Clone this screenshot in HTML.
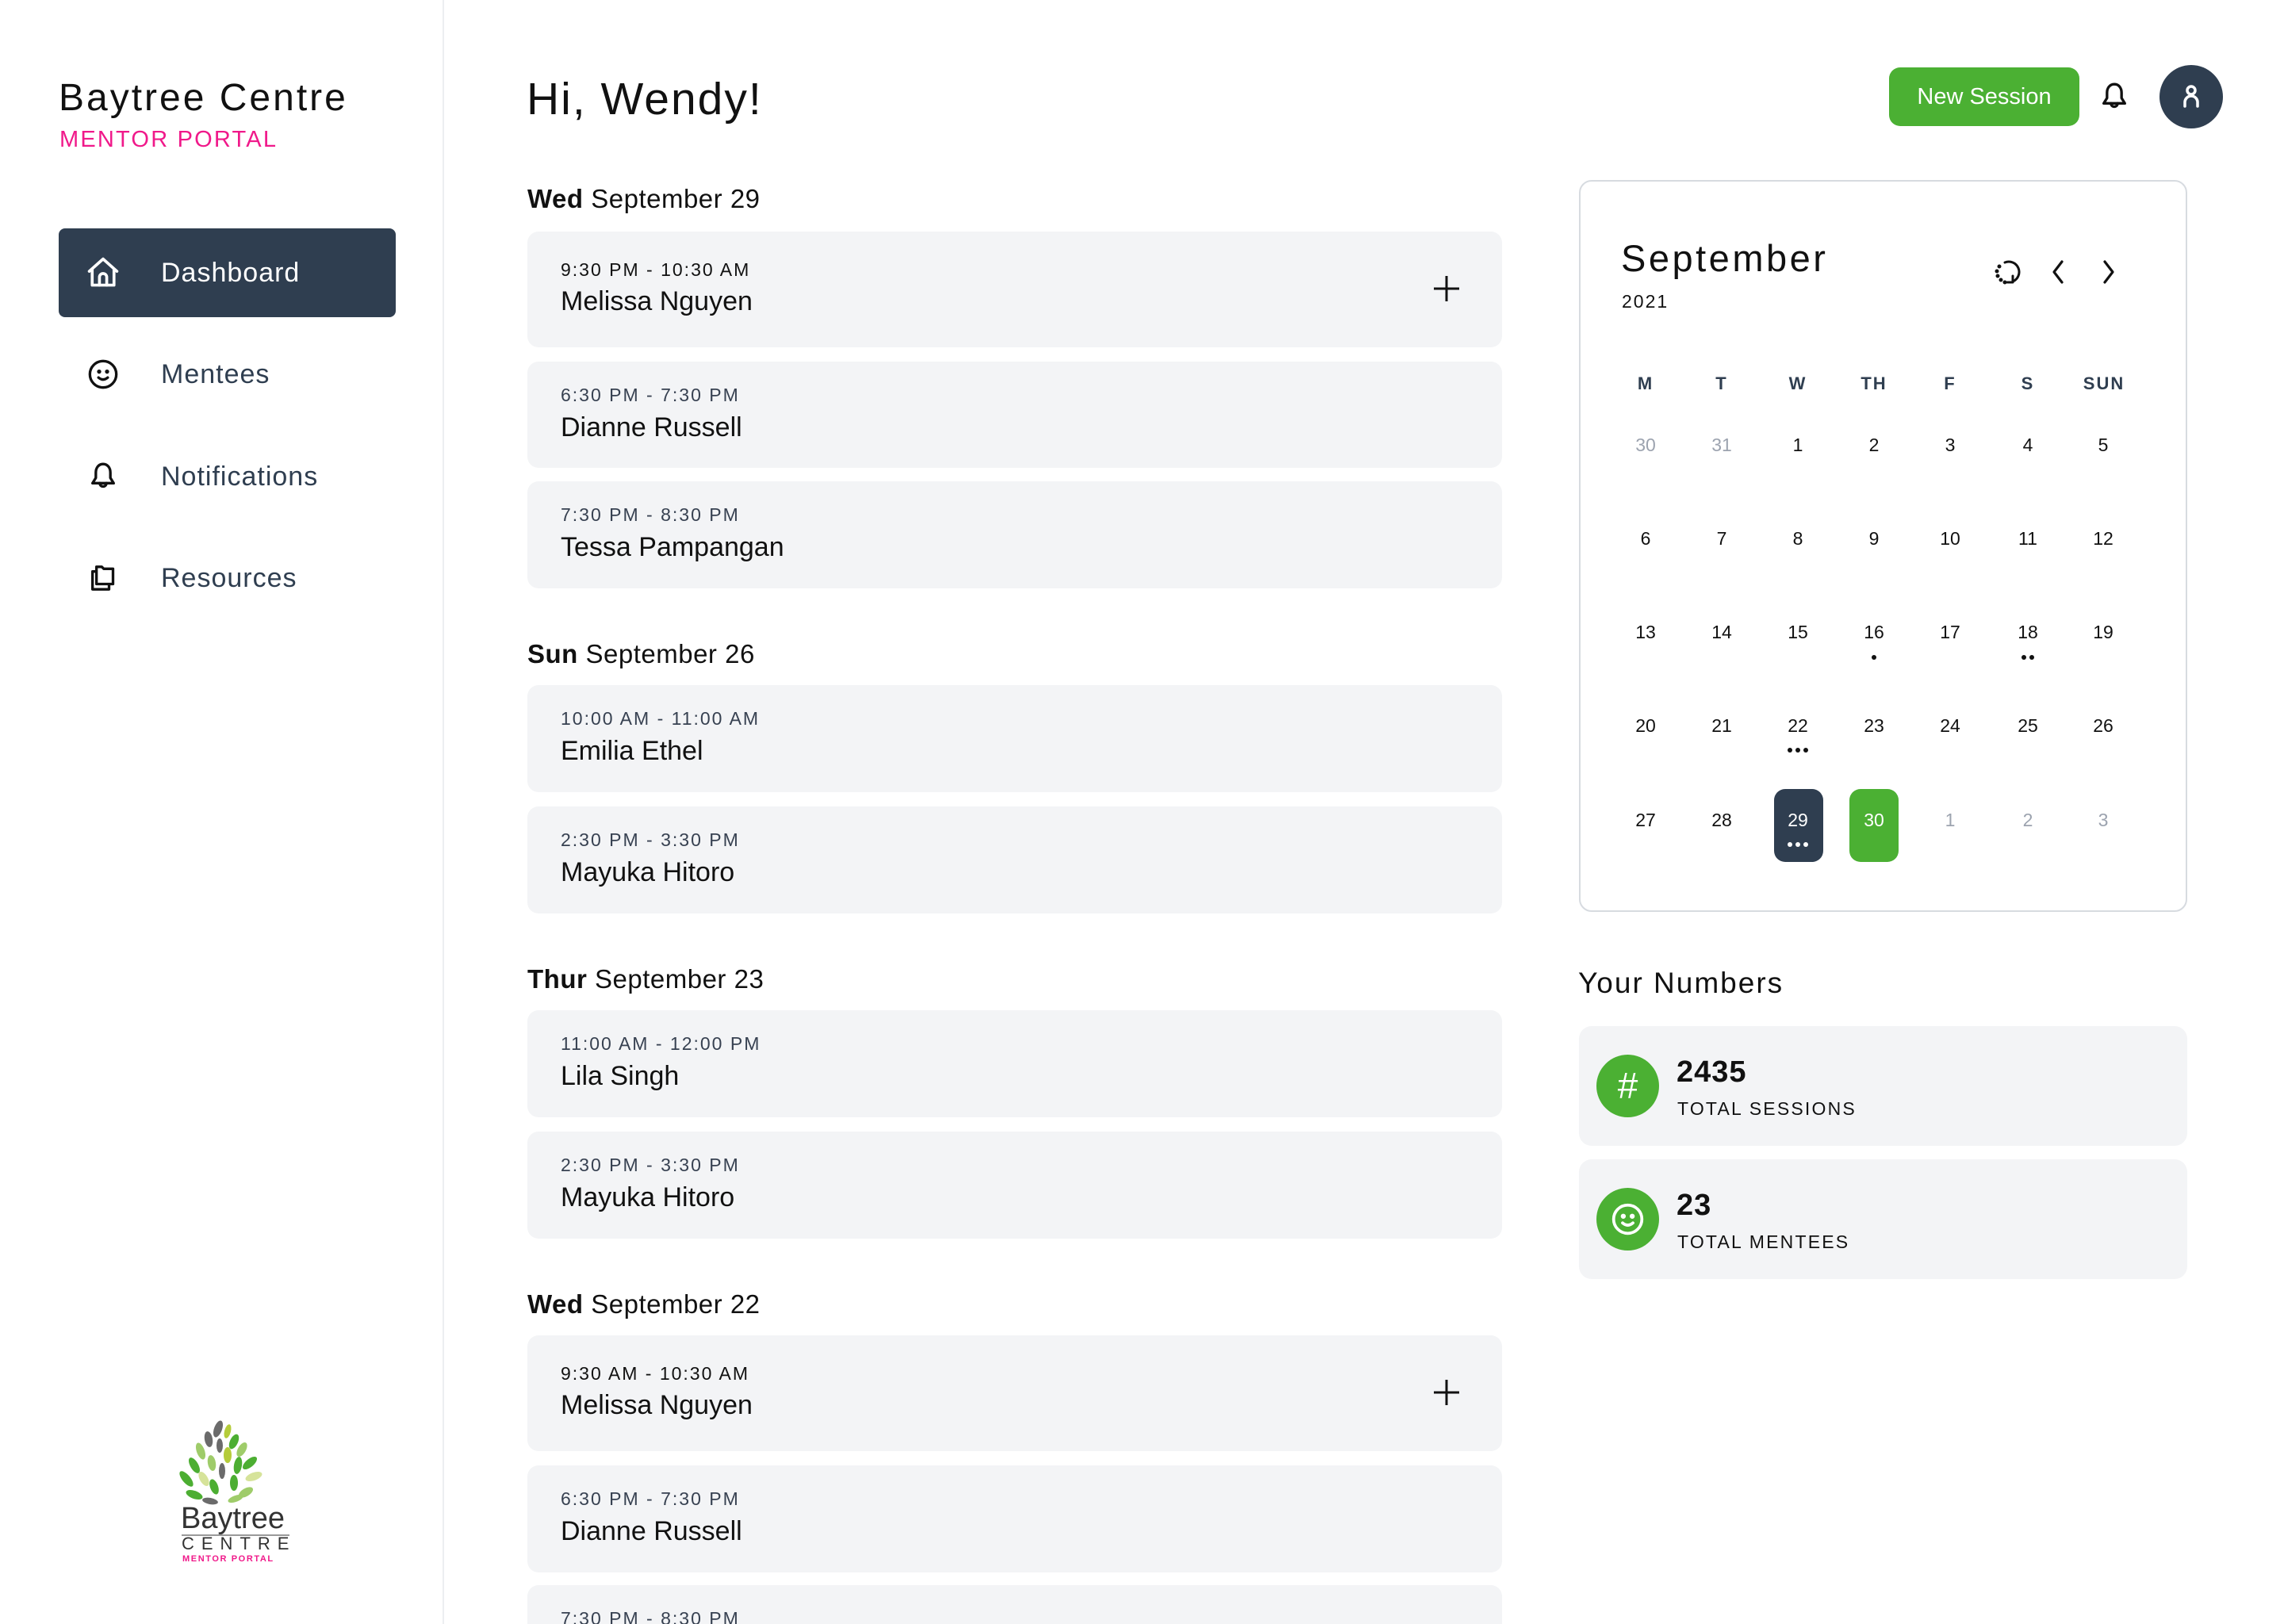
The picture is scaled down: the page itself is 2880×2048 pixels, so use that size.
<!DOCTYPE html>
<html><head><meta charset="utf-8"><style>
*{margin:0;padding:0;box-sizing:border-box}
html,body{width:2880px;height:2048px;overflow:hidden;background:#fff;font-family:"Liberation Sans",Arial,sans-serif;color:#111}
#root{position:relative;width:2880px;height:2048px;overflow:hidden}
.a{position:absolute}
.c{position:absolute;white-space:nowrap;height:60px;line-height:60px}
.card{position:absolute;left:665px;width:1229px;background:#f3f4f6;border-radius:14px}
.time{position:absolute;left:42px;font-size:23px;letter-spacing:2px;color:#374151;height:40px;line-height:40px;white-space:nowrap}
.name{position:absolute;left:42px;font-size:34px;color:#111;height:50px;line-height:50px;white-space:nowrap}
.hd{position:absolute;left:665px;font-size:33px;height:50px;line-height:50px;color:#111;letter-spacing:.5px}
.num{position:absolute;width:80px;text-align:center;font-size:23px;height:40px;line-height:40px;color:#111}
.g{color:#9ca3af}
.dh{position:absolute;width:90px;text-align:center;font-size:22px;font-weight:bold;letter-spacing:2px;color:#2f3e50;height:40px;line-height:40px}
.dot{position:absolute;width:6px;height:6px;border-radius:3px;background:#111}
</style></head><body><div id="root">
<div class="a" style="left:558px;top:0;width:2px;height:2048px;background:#eceef1"></div>
<div class="c" style="left:74px;top:94px;font-size:48px;font-weight:500;letter-spacing:3px;color:#111">Baytree Centre</div>
<div class="c" style="left:75px;top:146px;font-size:29px;letter-spacing:2.2px;color:#f0198a">MENTOR PORTAL</div>
<div class="a" style="left:74px;top:288px;width:425px;height:112px;background:#2f3e50;border-radius:8px"></div>
<svg class="a" style="left:108px;top:322px" width="44" height="44" viewBox="0 0 24 24" fill="none" stroke="#fff" stroke-width="2" stroke-linejoin="round" stroke-linecap="round"><path d="M2.5 11 L12 2.5 L21.5 11"/><path d="M4.5 9.5 V20.5 H19.5 V9.5"/><path d="M9.5 20.5 V15 a2.5 2.5 0 0 1 5 0 V20.5"/></svg>
<div class="c" style="left:203px;top:314px;font-size:34px;letter-spacing:1px;color:#fff">Dashboard</div>
<svg class="a" style="left:110px;top:452px" width="40" height="40" viewBox="0 0 24 24" fill="none" stroke="#111" stroke-width="2" stroke-linecap="round"><circle cx="12" cy="12" r="10"/><circle cx="9" cy="10" r=".6" fill="#111"/><circle cx="15" cy="10" r=".6" fill="#111"/><path d="M8.5 14.5 q3.5 3 7 0"/></svg>
<div class="c" style="left:203px;top:442px;font-size:34px;letter-spacing:1px;color:#2f3e50">Mentees</div>
<svg class="a" style="left:110px;top:580px" width="40" height="42" viewBox="0 0 24 24" fill="none" stroke="#111" stroke-width="2" stroke-linejoin="round" stroke-linecap="round"><path d="M12 2.5 c-3.5 0-5.5 3-5.5 6.5 v4 l-2.5 4 h16 l-2.5-4 v-4 c0-3.5-2-6.5-5.5-6.5z"/><path d="M9.5 17 a2.5 2.5 0 0 0 5 0"/></svg>
<div class="c" style="left:203px;top:571px;font-size:34px;letter-spacing:1px;color:#2f3e50">Notifications</div>
<svg class="a" style="left:110px;top:708px" width="40" height="42" viewBox="0 0 24 24" fill="none" stroke="#111" stroke-width="2" stroke-linejoin="round"><path d="M7 3.5 h4 l1.5 1.5 h7 v11.5 h-12.5z"/><path d="M7 7 h-3 v13.5 h12.5 v-4"/></svg>
<div class="c" style="left:203px;top:699px;font-size:34px;letter-spacing:1px;color:#2f3e50">Resources</div>

<svg class="a" style="left:225px;top:1790px" width="115" height="120" viewBox="0 0 115 120">
<g>
<ellipse cx="50" cy="12" rx="5" ry="11" fill="#6b6b6b" transform="rotate(20 50 12)"/>
<ellipse cx="62" cy="15" rx="4" ry="9" fill="#b5cc3a" transform="rotate(15 62 15)"/>
<ellipse cx="38" cy="25" rx="5" ry="10" fill="#6b6b6b" transform="rotate(-10 38 25)"/>
<ellipse cx="52" cy="33" rx="4" ry="9" fill="#6b6b6b"/>
<ellipse cx="70" cy="28" rx="5" ry="10" fill="#4cae32" transform="rotate(25 70 28)"/>
<ellipse cx="80" cy="38" rx="5" ry="10" fill="#9fcc6a" transform="rotate(30 80 38)"/>
<ellipse cx="28" cy="40" rx="5" ry="11" fill="#9fcc6a" transform="rotate(-20 28 40)"/>
<ellipse cx="62" cy="45" rx="5" ry="10" fill="#b5cc3a"/>
<ellipse cx="90" cy="55" rx="5" ry="11" fill="#4cae32" transform="rotate(50 90 55)"/>
<ellipse cx="20" cy="58" rx="5" ry="11" fill="#4cae32" transform="rotate(-30 20 58)"/>
<ellipse cx="42" cy="55" rx="5" ry="10" fill="#9fcc6a" transform="rotate(-10 42 55)"/>
<ellipse cx="75" cy="58" rx="5" ry="11" fill="#4cae32" transform="rotate(10 75 58)"/>
<ellipse cx="55" cy="65" rx="4" ry="10" fill="#6b6b6b"/>
<ellipse cx="10" cy="75" rx="5" ry="12" fill="#4cae32" transform="rotate(-40 10 75)"/>
<ellipse cx="32" cy="75" rx="5" ry="10" fill="#d6e39a" transform="rotate(-30 32 75)"/>
<ellipse cx="95" cy="72" rx="5" ry="11" fill="#d6e39a" transform="rotate(70 95 72)"/>
<ellipse cx="70" cy="80" rx="5" ry="10" fill="#4cae32"/>
<ellipse cx="45" cy="85" rx="5" ry="10" fill="#4cae32" transform="rotate(-20 45 85)"/>
<ellipse cx="20" cy="95" rx="5" ry="11" fill="#4cae32" transform="rotate(-70 20 95)"/>
<ellipse cx="85" cy="92" rx="5" ry="10" fill="#9fcc6a" transform="rotate(60 85 92)"/>
<ellipse cx="40" cy="103" rx="4" ry="10" fill="#6b6b6b" transform="rotate(-80 40 103)"/>
<ellipse cx="72" cy="100" rx="4" ry="10" fill="#9fcc6a" transform="rotate(70 72 100)"/>
</g></svg>
<div class="a" style="left:228px;top:1896px;font-size:38px;color:#333;line-height:38px">Baytree</div>
<div class="a" style="left:229px;top:1935px;width:136px;height:2px;background:#333;opacity:.5"></div>
<div class="a" style="left:229px;top:1936px;font-size:22px;letter-spacing:9px;color:#333;line-height:22px">CENTRE</div>
<div class="a" style="left:230px;top:1960px;font-size:11px;font-weight:bold;letter-spacing:1.6px;color:#f0198a;line-height:12px">MENTOR PORTAL</div>

<div class="c" style="left:664px;top:95px;font-size:57px;font-weight:500;letter-spacing:2px;color:#111">Hi, Wendy!</div>

<div class="hd" style="top:226px"><b>Wed</b> September 29</div>
<div class="card" style="top:292px;height:146px"><div class="time" style="top:28px;color:#111">9:30 PM - 10:30 AM</div><div class="name" style="top:63px">Melissa Nguyen</div>
<svg class="a" style="left:1141px;top:54px" width="36" height="36" viewBox="0 0 36 36" stroke="#111" stroke-width="3"><path d="M18 2V34M2 18H34"/></svg></div>
<div class="card" style="top:456px;height:134px"><div class="time" style="top:22px">6:30 PM - 7:30 PM</div><div class="name" style="top:58px">Dianne Russell</div></div>
<div class="card" style="top:607px;height:135px"><div class="time" style="top:22px">7:30 PM - 8:30 PM</div><div class="name" style="top:58px">Tessa Pampangan</div></div>

<div class="hd" style="top:800px"><b>Sun</b> September 26</div>
<div class="card" style="top:864px;height:135px"><div class="time" style="top:22px">10:00 AM - 11:00 AM</div><div class="name" style="top:58px">Emilia Ethel</div></div>
<div class="card" style="top:1017px;height:135px"><div class="time" style="top:22px">2:30 PM - 3:30 PM</div><div class="name" style="top:58px">Mayuka Hitoro</div></div>

<div class="hd" style="top:1210px"><b>Thur</b> September 23</div>
<div class="card" style="top:1274px;height:135px"><div class="time" style="top:22px">11:00 AM - 12:00 PM</div><div class="name" style="top:58px">Lila Singh</div></div>
<div class="card" style="top:1427px;height:135px"><div class="time" style="top:22px">2:30 PM - 3:30 PM</div><div class="name" style="top:58px">Mayuka Hitoro</div></div>

<div class="hd" style="top:1620px"><b>Wed</b> September 22</div>
<div class="card" style="top:1684px;height:146px"><div class="time" style="top:28px;color:#111">9:30 AM - 10:30 AM</div><div class="name" style="top:63px">Melissa Nguyen</div>
<svg class="a" style="left:1141px;top:54px" width="36" height="36" viewBox="0 0 36 36" stroke="#111" stroke-width="3"><path d="M18 2V34M2 18H34"/></svg></div>
<div class="card" style="top:1848px;height:135px"><div class="time" style="top:22px">6:30 PM - 7:30 PM</div><div class="name" style="top:58px">Dianne Russell</div></div>
<div class="card" style="top:1999px;height:135px"><div class="time" style="top:22px">7:30 PM - 8:30 PM</div><div class="name" style="top:58px">Tessa Pampangan</div></div>

<div class="a" style="left:2382px;top:85px;width:240px;height:74px;background:#4bb033;border-radius:14px;color:#fff;font-size:29px;text-align:center;line-height:74px">New Session</div>
<svg class="a" style="left:2646px;top:100px" width="40" height="44" viewBox="0 0 24 24" fill="none" stroke="#111" stroke-width="2" stroke-linejoin="round" stroke-linecap="round"><path d="M12 2.5 c-3.5 0-5.5 3-5.5 6.5 v4 l-2.5 4 h16 l-2.5-4 v-4 c0-3.5-2-6.5-5.5-6.5z"/><path d="M9.5 17 a2.5 2.5 0 0 0 5 0"/></svg>
<div class="a" style="left:2723px;top:82px;width:80px;height:80px;border-radius:40px;background:#2f3e50"></div>
<svg class="a" style="left:2743px;top:102px" width="40" height="40" viewBox="0 0 40 40" fill="none" stroke="#fff" stroke-width="3.5" stroke-linecap="round"><circle cx="20" cy="12" r="5"/><path d="M12 32 V27 a8 8 0 0 1 16 0 V32"/></svg>

<div class="a" style="left:1991px;top:227px;width:767px;height:923px;border:2px solid #d7dbe0;border-radius:16px"></div>
<div class="c" style="left:2044px;top:296px;font-size:47px;font-weight:500;letter-spacing:3.5px;color:#111">September</div>
<div class="c" style="left:2045px;top:350px;font-size:23px;letter-spacing:2px;color:#111">2021</div>
<svg class="a" style="left:2514px;top:326px" width="34" height="36" viewBox="0 0 34 36" fill="none" stroke="#111" stroke-width="3" stroke-linecap="round"><path d="M14 5 A12 12 0 1 1 24 29"/><path d="M24 22 V30 H17" stroke-linejoin="round"/><circle cx="7" cy="10" r="1" fill="#111"/><circle cx="4" cy="16" r="1" fill="#111"/><circle cx="5" cy="22" r="1" fill="#111"/><circle cx="9" cy="27" r="1" fill="#111"/><circle cx="14" cy="30" r="1" fill="#111"/></svg>
<svg class="a" style="left:2583px;top:327px" width="24" height="32" viewBox="0 0 24 32" fill="none" stroke="#111" stroke-width="3.2" stroke-linecap="round" stroke-linejoin="round"><path d="M17 3 L7 16 L17 29"/></svg>
<svg class="a" style="left:2647px;top:327px" width="24" height="32" viewBox="0 0 24 32" fill="none" stroke="#111" stroke-width="3.2" stroke-linecap="round" stroke-linejoin="round"><path d="M7 3 L17 16 L7 29"/></svg>

<div class="dh" style="left:2030px;top:464px">M</div>
<div class="dh" style="left:2126px;top:464px">T</div>
<div class="dh" style="left:2222px;top:464px">W</div>
<div class="dh" style="left:2318px;top:464px">TH</div>
<div class="dh" style="left:2414px;top:464px">F</div>
<div class="dh" style="left:2512px;top:464px">S</div>
<div class="dh" style="left:2608px;top:464px">SUN</div>

<div class="a" style="left:2237px;top:995px;width:62px;height:92px;border-radius:14px;background:#2f3e50"></div>
<div class="a" style="left:2332px;top:995px;width:62px;height:92px;border-radius:14px;background:#4bb033"></div>

<div id="cal"></div>
<script>
var cols=[2075,2171,2267,2363,2459,2557,2652],rows=[563,681,799,917,1036];
var d=[["30","31","1","2","3","4","5"],["6","7","8","9","10","11","12"],["13","14","15","16","17","18","19"],["20","21","22","23","24","25","26"],["27","28","29","30","1","2","3"]];
var h="";
for(var r=0;r<5;r++)for(var c=0;c<7;c++){var cls="num";if((r==0&&c<2)||(r==4&&c>3))cls+=" g";var col="";if(r==4&&(c==2||c==3))col="color:#fff;";h+='<div class="'+cls+'" style="'+col+'left:'+(cols[c]-40)+'px;top:'+(rows[r]-22)+'px">'+d[r][c]+'</div>';}
function dots(x,y,n,w){for(var i=0;i<n;i++){var dx=x+(i-(n-1)/2)*10-3;h+='<div class="dot" style="left:'+dx+'px;top:'+(y-3)+'px;'+(w?'background:#fff':'')+'"></div>';}}
dots(2363,829,1);dots(2557,829,2);dots(2267,946,3);dots(2267,1065,3,1);
document.getElementById("cal").innerHTML=h;
</script>

<div class="c" style="left:1990px;top:1210px;font-size:37px;font-weight:500;letter-spacing:2px;color:#111">Your Numbers</div>
<div class="a" style="left:1991px;top:1294px;width:767px;height:151px;background:#f3f4f6;border-radius:16px"></div>
<div class="a" style="left:1991px;top:1462px;width:767px;height:151px;background:#f3f4f6;border-radius:16px"></div>
<div class="a" style="left:2013px;top:1330px;width:79px;height:79px;border-radius:40px;background:#4bb033;color:#fff;font-size:46px;text-align:center;line-height:79px">#</div>
<div class="a" style="left:2013px;top:1498px;width:79px;height:79px;border-radius:40px;background:#4bb033"></div>
<svg class="a" style="left:2030px;top:1515px" width="45" height="45" viewBox="0 0 24 24" fill="none" stroke="#fff" stroke-width="2" stroke-linecap="round"><circle cx="12" cy="12" r="9.5"/><circle cx="9" cy="10" r=".7" fill="#fff"/><circle cx="15" cy="10" r=".7" fill="#fff"/><path d="M8.5 14.5 q3.5 3 7 0"/></svg>
<div class="c" style="left:2114px;top:1322px;font-size:38px;font-weight:bold;letter-spacing:1px;color:#111">2435</div>
<div class="c" style="left:2115px;top:1368px;font-size:23px;letter-spacing:2.2px;color:#111">TOTAL SESSIONS</div>
<div class="c" style="left:2114px;top:1490px;font-size:38px;font-weight:bold;letter-spacing:1px;color:#111">23</div>
<div class="c" style="left:2115px;top:1536px;font-size:23px;letter-spacing:2.2px;color:#111">TOTAL MENTEES</div>
</div></body></html>
